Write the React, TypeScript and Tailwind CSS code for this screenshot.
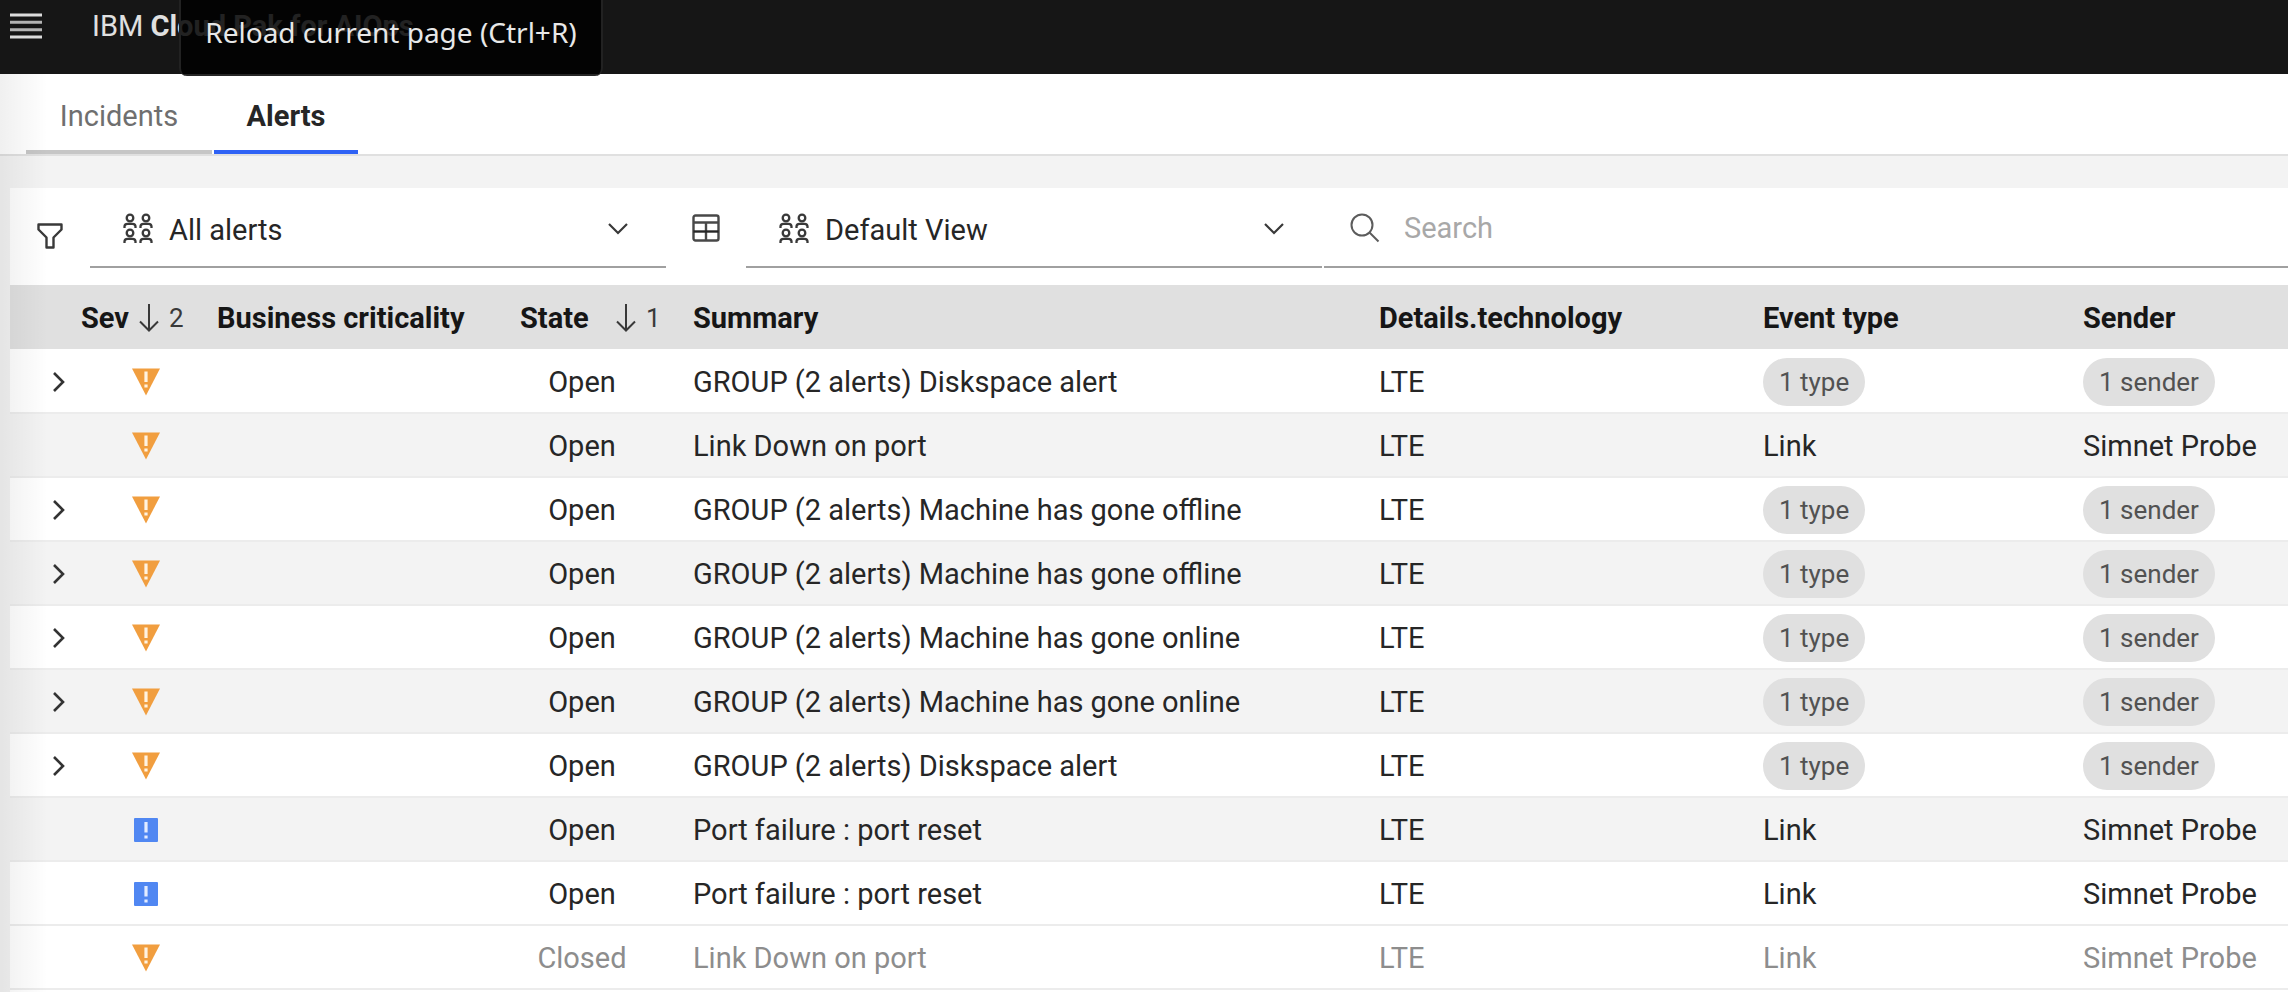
import React from "react";

type Alert = {
  group: boolean;
  severity: "major" | "info";
  state: "Open" | "Closed";
  summary: string;
};

const alerts: Alert[] = [
  { group: true, severity: "major", state: "Open", summary: "GROUP (2 alerts) Diskspace alert" },
  { group: false, severity: "major", state: "Open", summary: "Link Down on port" },
  { group: true, severity: "major", state: "Open", summary: "GROUP (2 alerts) Machine has gone offline" },
  { group: true, severity: "major", state: "Open", summary: "GROUP (2 alerts) Machine has gone offline" },
  { group: true, severity: "major", state: "Open", summary: "GROUP (2 alerts) Machine has gone online" },
  { group: true, severity: "major", state: "Open", summary: "GROUP (2 alerts) Machine has gone online" },
  { group: true, severity: "major", state: "Open", summary: "GROUP (2 alerts) Diskspace alert" },
  { group: false, severity: "info", state: "Open", summary: "Port failure : port reset" },
  { group: false, severity: "info", state: "Open", summary: "Port failure : port reset" },
  { group: false, severity: "major", state: "Closed", summary: "Link Down on port" },
];

function MenuIcon() {
  return (
    <svg width="32" height="26" viewBox="0 0 32 26" fill="none" strokeWidth="3" aria-hidden="true">
      <path d="M0 2h32M0 24h32" stroke="#dcdcdc" />
      <path d="M0 9.300h32M0 16.700h32" stroke="#b4b4b4" />
    </svg>
  );
}

function FilterIcon() {
  return (
    <svg width="26" height="26" viewBox="0 0 26 26" fill="none" stroke="#393939" strokeWidth="2.400" strokeLinejoin="round" aria-hidden="true">
      <path d="M1.500 1.500h23v5l-8 8v10h-7v-10l-8-8z" />
    </svg>
  );
}

const people = [
  [0, 0],
  [16, 0],
  [0, 15],
  [16, 15],
];

function PeopleIcon() {
  return (
    <svg width="30" height="32" viewBox="0 0 30 32" fill="none" stroke="#393939" strokeWidth="2.300" aria-hidden="true">
      {people.map(([x, y]) => (
        <g key={`${x}-${y}`} transform={`translate(${x} ${y})`}>
          <circle cx="7" cy="5" r="3.300" />
          <path d="M1.500 15v-1.500q0-2.700 3-2.700h5q3 0 3 2.700v1.500" />
        </g>
      ))}
    </svg>
  );
}

function TableIcon() {
  return (
    <svg width="28" height="28" viewBox="0 0 28 28" fill="none" stroke="#484848" strokeWidth="2.400" aria-hidden="true">
      <rect x="1.500" y="1.500" width="25" height="25" rx="2" />
      <path d="M1.500 8.500h25M14 8.500v18" />
      <path d="M1.500 17.500h25" stroke="#262626" />
    </svg>
  );
}

function SearchIcon() {
  return (
    <svg width="30" height="30" viewBox="0 0 30 30" fill="none" stroke="#5c5c5c" strokeWidth="2" aria-hidden="true">
      <circle cx="12" cy="12" r="10.500" />
      <path d="M19.500 19.500l9 9" />
    </svg>
  );
}

function ChevronDown() {
  return (
    <svg width="20" height="12" viewBox="0 0 20 12" fill="none" stroke="#393939" strokeWidth="2.200" aria-hidden="true">
      <path d="M1 1l9 9 9-9" />
    </svg>
  );
}

function ChevronRight() {
  return (
    <svg width="12" height="20" viewBox="0 0 12 20" fill="none" stroke="#333333" strokeWidth="2.600" aria-hidden="true">
      <path d="M1 1l9 9-9 9" />
    </svg>
  );
}

function SortArrow() {
  return (
    <svg width="20" height="28" viewBox="0 0 20 28" fill="none" stroke="#393939" strokeWidth="2" aria-hidden="true">
      <path d="M10 0v26M1 17.500l9 9 9-9" />
    </svg>
  );
}

function SeverityIcon({ severity }: { severity: Alert["severity"] }) {
  if (severity === "info") {
    return (
      <svg width="24" height="24" viewBox="0 0 24 24" role="img" aria-label="Information">
        <rect width="24" height="24" rx="1" fill="#5087f2" />
        <path d="M12 4v10.500M12 17.500v3" stroke="#e3ecff" strokeWidth="3.200" />
      </svg>
    );
  }
  return (
    <svg width="28" height="28" viewBox="0 0 28 28" role="img" aria-label="Major">
      <path d="M0 .500h28l-14 27z" fill="#f19e3f" />
      <path d="M14 3.500v10.500M14 16.500v3" stroke="#fff3e2" strokeWidth="3.200" />
    </svg>
  );
}

function Picker({ label, value }: { label: string; value: string }) {
  return (
    <div className="relative flex h-20 w-[576px] shrink-0 items-center border-b-2 border-[#a0a0a0] pt-1 pl-[33px]">
      <PeopleIcon />
      <select aria-label={label} className="h-full flex-1 appearance-none bg-transparent pt-[2px] pr-16 pl-4 text-[29px] text-[#262626]">
        <option>{value}</option>
      </select>
      <span className="pointer-events-none absolute right-[38px]">
        <ChevronDown />
      </span>
    </div>
  );
}

function Tag({ children }: { children: React.ReactNode }) {
  return (
    <span className="inline-flex h-12 items-center rounded-full bg-[#e0e0e0] px-4 align-middle text-[26px] text-[#525252]">
      {children}
    </span>
  );
}

function AlertRow({ alert, striped }: { alert: Alert; striped: boolean }) {
  const tone = alert.state === "Closed" ? "text-[#8d8d8d]" : "text-[#262626]";
  return (
    <tr className={`h-16 border-b-2 border-[#ececec] ${tone} ${striped ? "bg-[#f3f3f3]" : "bg-white"} *:pt-[2px]`}>
      <td className="pl-[43px]">
        {alert.group && (
          <button type="button" aria-label="Expand group" className="flex">
            <ChevronRight />
          </button>
        )}
      </td>
      <td>
        <span className="flex w-[130px] justify-center">
          <SeverityIcon severity={alert.severity} />
        </span>
      </td>
      <td />
      <td>
        <span className="flex w-[124px] justify-center">{alert.state}</span>
      </td>
      <td>{alert.summary}</td>
      <td>LTE</td>
      <td>{alert.group ? <Tag>1 type</Tag> : "Link"}</td>
      <td>{alert.group ? <Tag>1 sender</Tag> : "Simnet Probe"}</td>
    </tr>
  );
}

export default function App() {
  return (
    <div className="relative min-h-screen overflow-hidden bg-[#f3f3f3] font-['Roboto','Noto_Sans',sans-serif] text-[29px] leading-9 text-[#262626]">
      <header className="relative flex h-[74px] items-start bg-[#161616] text-white">
        <button type="button" aria-label="Open menu" className="mt-[13px] ml-[10px]">
          <MenuIcon />
        </button>
        <p className="mt-2 ml-[50px] whitespace-nowrap text-[#e0e0e0]">
          IBM <span className="font-bold">Cloud Pak for AIOps</span>
        </p>
        <div role="tooltip" className="absolute top-0 left-[179px] z-10 h-[76px] w-[424px] rounded-b-lg border-x-2 border-[#222222] bg-black/85 pt-[14px] text-center font-['Noto_Sans',sans-serif] text-[28px] whitespace-nowrap text-[#e8e8e8]">
          Reload current page (Ctrl+R)
        </div>
      </header>

      <nav className="flex h-[82px] items-stretch gap-[2px] border-b-2 border-[#e0e0e0] bg-white pl-[26px]">
        <a href="#incidents" className="flex w-[186px] items-center justify-center border-b-4 border-[#c6c6c6] pt-2 text-[#6f6f6f]">
          Incidents
        </a>
        <a href="#alerts" aria-current="page" className="flex w-36 items-center justify-center border-b-4 border-[#2f62f5] pt-2 font-bold">
          Alerts
        </a>
      </nav>

      <main className="mt-8 ml-[10px] bg-white pb-1">
        <div className="flex h-[97px] items-start">
          <button type="button" aria-label="Filter" className="flex h-24 w-20 items-center justify-center">
            <FilterIcon />
          </button>
          <Picker label="Filter" value="All alerts" />
          <span className="flex h-20 w-20 items-center justify-center">
            <TableIcon />
          </span>
          <Picker label="View" value="Default View" />
          <label className="ml-[2px] flex h-20 flex-1 items-center gap-6 border-b-2 border-[#a0a0a0] pt-[2px] pl-[26px]">
            <SearchIcon />
            <input type="search" aria-label="Search" placeholder="Search" className="min-w-0 flex-1 bg-transparent placeholder:text-[#a8a8a8]" />
          </label>
        </div>

        <table className="w-full table-fixed border-collapse text-left whitespace-nowrap">
          <colgroup>
            <col className="w-[71px]" />
            <col className="w-[136px]" />
            <col className="w-[303px]" />
            <col className="w-[173px]" />
            <col className="w-[686px]" />
            <col className="w-[384px]" />
            <col className="w-[320px]" />
            <col />
          </colgroup>
          <thead>
            <tr className="h-16 bg-[#e0e0e0] text-[#161616] *:pt-[2px]">
              <th />
              <th>
                <span className="flex items-center gap-[10px]">
                  Sev <SortArrow /> <span className="text-[26px] font-normal text-[#393939]">2</span>
                </span>
              </th>
              <th>Business criticality</th>
              <th>
                <span className="flex items-center gap-[10px]">
                  <span className="w-[86px]">State</span>
                  <SortArrow /> <span className="text-[26px] font-normal text-[#393939]">1</span>
                </span>
              </th>
              <th>Summary</th>
              <th>Details.technology</th>
              <th>Event type</th>
              <th>Sender</th>
            </tr>
          </thead>
          <tbody>
            {alerts.map((alert, i) => (
              <AlertRow key={i} alert={alert} striped={i % 2 === 1 && i < 9} />
            ))}
          </tbody>
        </table>
      </main>

      <div className="pointer-events-none absolute top-[74px] bottom-0 left-0 w-12 bg-linear-to-r from-black/6 to-transparent" />
    </div>
  );
}
